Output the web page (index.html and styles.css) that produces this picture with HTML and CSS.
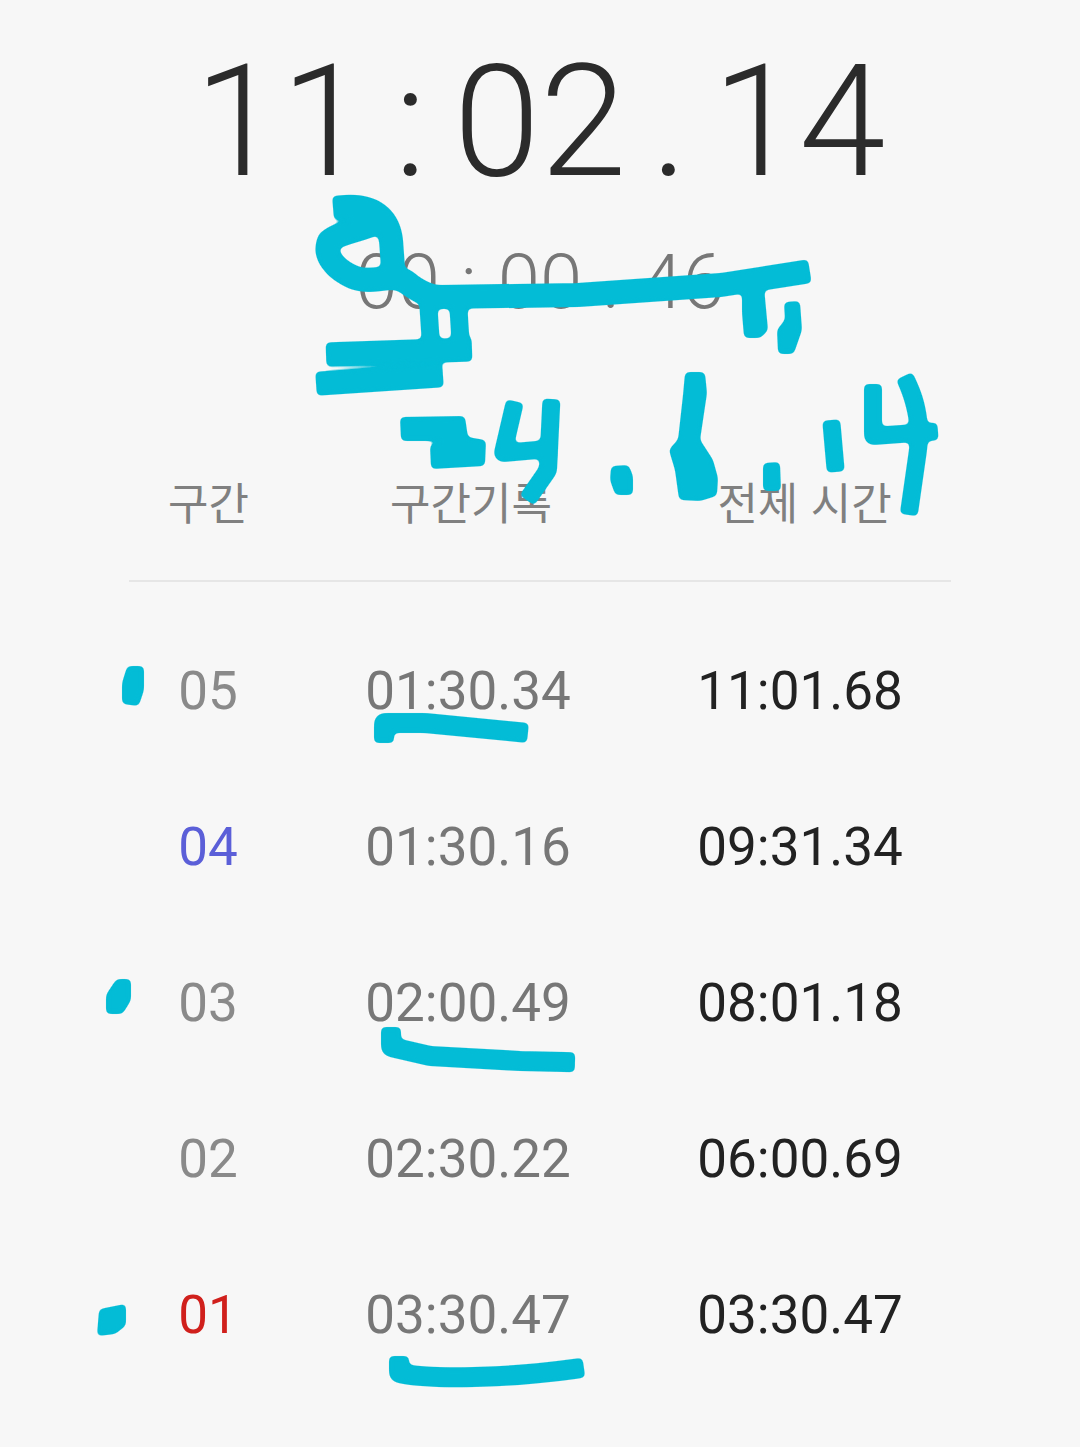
FILE: index.html
```html
<!DOCTYPE html>
<html lang="ko">
<head>
<meta charset="utf-8">
<title>스톱워치</title>
<link rel="stylesheet" href="styles.css">
</head>
<body>
<main class="page">
  <div class="clock">
    <span>11</span><span class="sep">:</span><span>02</span><span class="sep">.</span><span>14</span>
  </div>
  <div class="lap-clock">
    <span>00</span><span class="sep">:</span><span>00</span><span class="sep">.</span><span>46</span>
  </div>
  <div class="table">
    <div class="row head">
      <div class="h1">구간</div>
      <div class="h2">구간기록</div>
      <div class="h3">전체 시간</div>
    </div>
    <div class="row lap"><div class="num">05</div><div class="split">01:30.34</div><div class="total">11:01.68</div></div>
    <div class="row lap"><div class="num fast">04</div><div class="split">01:30.16</div><div class="total">09:31.34</div></div>
    <div class="row lap"><div class="num">03</div><div class="split">02:00.49</div><div class="total">08:01.18</div></div>
    <div class="row lap"><div class="num">02</div><div class="split">02:30.22</div><div class="total">06:00.69</div></div>
    <div class="row lap"><div class="num slow">01</div><div class="split">03:30.47</div><div class="total">03:30.47</div></div>
  </div>
</main>
<svg class="ink" viewBox="0 0 1080 1447" width="1080" height="1447" aria-hidden="true">
  <defs>
    <filter id="marker" x="0" y="0" width="100%" height="100%" filterUnits="userSpaceOnUse" primitiveUnits="userSpaceOnUse" color-interpolation-filters="sRGB">
      <feGaussianBlur stdDeviation="2.5"/>
      <feComponentTransfer>
        <feFuncA type="linear" slope="6" intercept="-2.5"/>
      </feComponentTransfer>
    </filter>
  </defs>
  <g class="marks">
    <g class="w24">
      <path d="M345 207C370 205 388 215 391 240L393 268"/>
      <path d="M378 222C360 231 340 232 329 241C323 255 335 270 355 278C375 285 395 270 410 285C420 292 430 297 440 297L578 295L721 285L798 273"/>
      <path d="M338 354L460 350"/>
      <path d="M328 383L431 376"/>
    </g>
    <g class="w18">
      <path d="M428 300L431 345"/>
      <path d="M458 300L461 350"/>
      <path d="M513 410L503 453L548 449"/>
      <path d="M551 408L548 470L532 493"/>
      <path d="M832 429L835 463"/>
      <path d="M873 393V436L929 432"/>
      <path d="M908 384C918 405 921 425 918 450L910 506"/>
    </g>
    <g class="w20">
      <path d="M384 733V723L425 723L518 732"/>
      <path d="M391 1037V1047L430 1056L520 1061L565 1062"/>
      <path d="M399 1366V1373C430 1380 510 1378 574 1369"/>
    </g>
    <g class="blob">
      <path d="M401 418L464 417L467 438L485 441L484 465L432 468L431 446L444 440L402 440Z"/>
      <path d="M686 373L704 373L706 393L699 440L712 460L717 478L716 495L700 500L680 499L676 470L670 450L679 440L684 395Z"/>
      <path d="M743 295L763 287L767 330L760 337L745 337L743 313Z"/>
      <path d="M785 303L799 302L801 330L793 353L779 353L778 330L786 320Z"/>
      <path d="M612 467L628 466L632 476L632 494L616 494L611 480Z"/>
      <path d="M764 464L779 463L780 490L764 490Z"/>
      <path d="M128 667L143 667L143 690L138 705L123 703L123 683Z"/>
      <path d="M117 980L130 980L130 1000L122 1013L107 1013L107 995Z"/>
      <path d="M100 1310L125 1305L125 1325L115 1333L98 1335Z"/>
    </g>
  </g>
</svg>
</body>
</html>
```
FILE: styles.css
```css
* { box-sizing: border-box; }
html, body { margin: 0; padding: 0; }
body {
  width: 1080px;
  height: 1447px;
  overflow: hidden;
  background: #f7f7f7;
  font-family: Roboto, "Noto Sans CJK KR", sans-serif;
  position: relative;
}
.page { display: flex; flex-direction: column; align-items: center; padding-top: 44px; }
.clock, .lap-clock { display: flex; justify-content: center; font-weight: 300; line-height: 1; }
.clock { font-size: 156px; color: #2b2b2b; height: 156px; gap: 21px; }
.clock .sep { width: 44px; text-align: center; }
.lap-clock { font-size: 76px; color: #777; margin-top: 44px; height: 76px; gap: 10px; }
.lap-clock .sep { width: 38px; text-align: center; }
.table { width: 822px; margin-top: 159px; }
.row { display: grid; grid-template-columns: 158px 362px 302px; text-align: center; }
.head {
  height: 103px;
  font-family: "Noto Sans CJK KR", sans-serif;
  font-size: 44px;
  line-height: 44px;
  color: #808080;
  border-bottom: 2px solid #e6e6e6;
  margin-bottom: 31px;
  font-weight: 400;
}
.h1 { padding-left: 1px; }
.h2 { padding-left: 6px; }
.h3 { padding-left: 9px; }
.lap { height: 156px; align-items: center; font-size: 53px; line-height: 60px; }
.num { color: #8a8a8a; }
.fast { color: #5b5fd8; }
.slow { color: #d0201c; }
.split { color: #777; }
.total { color: #222; }
.ink { position: absolute; left: 0; top: 0; }
.marks { filter: url(#marker); }
.ink path { fill: none; stroke: #03bcd6; stroke-linecap: square; stroke-linejoin: round; }
.w24 path { stroke-width: 24px; }
.w18 path { stroke-width: 18px; }
.w20 path { stroke-width: 20px; }
.ink .blob path { fill: #03bcd6; stroke-width: 2px; }
```
